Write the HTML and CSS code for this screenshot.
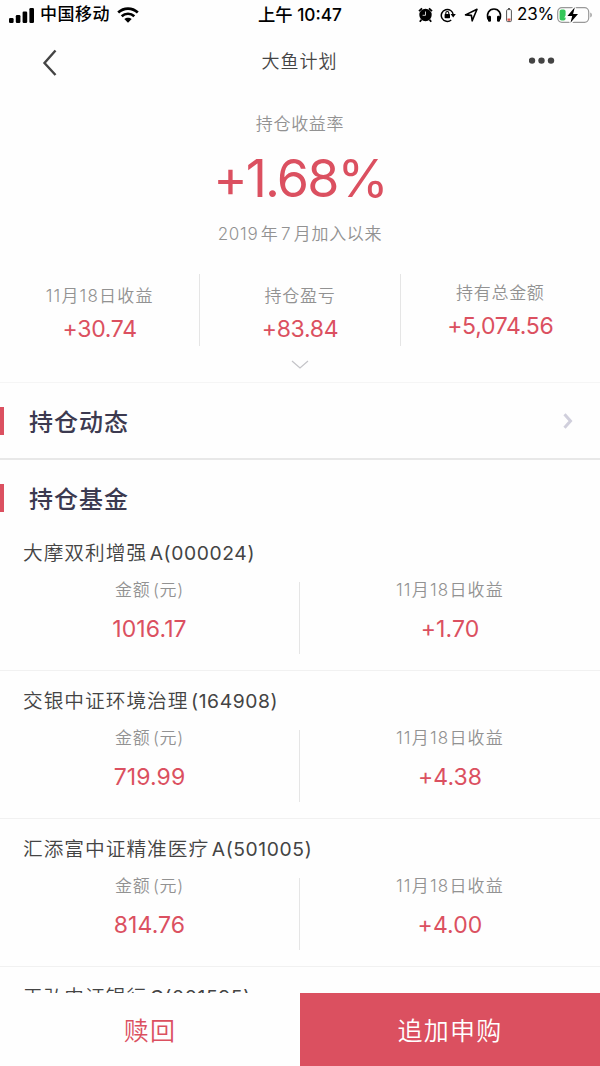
FILE: index.html
```html
<!DOCTYPE html>
<html lang="zh-CN">

<head>
    <title>大鱼计划</title>
    <meta charset="UTF-8">
    <link rel="stylesheet" href="styles.css">
</head>

<body>
    <div class="page">
        <div class="status-bar">
            <div class="status-left">
                <svg class="signal" width="26" height="16" viewBox="0 0 26 16">
                    <rect x="0" y="11" width="4.6" height="5" rx="1.2"/>
                    <rect x="6.8" y="8" width="4.6" height="8" rx="1.2"/>
                    <rect x="13.6" y="4.5" width="4.6" height="11.5" rx="1.2"/>
                    <rect x="20.4" y="1" width="4.6" height="15" rx="1.2"/>
                </svg>
                <span class="carrier">中国移动</span>
                <svg class="wifi" width="22" height="16" viewBox="0 0 22 16">
                    <path d="M1.2 5.6C6.8.4 15.2.4 20.8 5.6M4.7 9.2c3.6-3.3 9-3.3 12.6 0" fill="none" stroke="#000" stroke-width="2.7"/>
                    <path d="M7.3 12.1c2.1-1.9 5.3-1.9 7.4 0L11 15.8z"/>
                </svg>
            </div>
            <div class="clock">上午 10:47</div>
            <div class="status-right">
                <svg width="15" height="16" viewBox="0 0 15 16">
                    <circle cx="7.5" cy="8" r="6.2"/>
                    <path d="M1 4.2 4 1.4M14 4.2 11 1.4M3.4 12.8 1.8 14.8M11.6 12.8l1.6 2" stroke="#000" stroke-width="1.8"/>
                    <path d="M7.5 4.5v3.8H4.6" fill="none" stroke="#fff" stroke-width=".8"/>
                </svg>
                <svg class="lock" width="16" height="16" viewBox="0 0 16 16">
                    <path d="M11.2 13A6 6 0 1 1 13.3 8" fill="none" stroke="#000" stroke-width="1.5"/>
                    <path d="M10.6 7h5.2l-2.6 3.6z"/>
                    <rect x="4.6" y="7.1" width="5.4" height="4.1" rx=".6"/>
                    <path d="M5.8 7.3V6a1.5 1.5 0 0 1 3 0v1.3" fill="none" stroke="#000" stroke-width="1.1"/>
                </svg>
                <svg class="location" width="15" height="16" viewBox="0 0 15 16">
                    <path d="M1.5 7.9 13 2.3 8.2 13.8 7.4 8.4z" fill="none" stroke="#000" stroke-width="1.6" stroke-linejoin="round"/>
                </svg>
                <svg class="headphone" width="16" height="16" viewBox="0 0 16 16">
                    <path d="M2.1 12.5C.3 6.5 3 2 8 2s7.7 4.5 5.9 10.5" fill="none" stroke="#000" stroke-width="1.6"/>
                    <rect x="2" y="8.8" width="3" height="6" rx="1.2"/>
                    <rect x="11" y="8.8" width="3" height="6" rx="1.2"/>
                </svg>
                <svg class="mini-battery" width="6" height="16" viewBox="0 0 6 16">
                    <path d="M2 1h2v1.5H2z" fill="#555"/>
                    <rect x=".6" y="2.6" width="4.8" height="12" rx="1" fill="#fff" stroke="#555"/>
                    <rect x="1.5" y="11.5" width="3" height="2.3" fill="#e05a50"/>
                </svg>
                <span class="percent">23%</span>
                <svg class="battery" width="36" height="18" viewBox="0 0 36 18">
                    <rect x=".7" y="1.7" width="31" height="14.6" rx="4.2" fill="none" stroke="#999" stroke-width="1.2"/>
                    <path d="M33.3 6.5c2 .8 2 4.2 0 5z" fill="#999"/>
                    <rect x="2.6" y="3.6" width="6" height="10.8" rx="2" fill="#34c759"/>
                    <path d="M17.8 1.3 10.4 10h4.8l-1.7 6.7L21 8h-4.900z" stroke="#fff" stroke-width="3"/>
                    <path d="M17.8 1.3 10.4 10h4.8l-1.7 6.7L21 8h-4.900z"/>
                </svg>
            </div>
        </div>

        <div class="nav">
            <svg class="back" width="16" height="28" viewBox="0 0 16 28">
                <path d="M13.5 2.5 2.5 15l11 12" fill="none" stroke="#444" stroke-width="2.4"/>
            </svg>
            <h1 class="nav-title">大鱼计划</h1>
            <svg class="more" width="26" height="10" viewBox="0 0 26 10">
                <circle cx="3" cy="3.6" r="3.2"/>
                <circle cx="12.5" cy="3.6" r="3.2"/>
                <circle cx="22" cy="3.6" r="3.2"/>
            </svg>
        </div>

        <div class="summary">
            <div class="label">持仓收益率</div>
            <div class="rate">+1.68%</div>
            <div class="label since">2019 年 7 月加入以来</div>
            <div class="stats">
                <div class="stat">
                    <div class="label date">11月18日收益</div>
                    <div class="value">+30.74</div>
                </div>
                <div class="stat">
                    <div class="label">持仓盈亏</div>
                    <div class="value">+83.84</div>
                </div>
                <div class="stat stat-total">
                    <div class="label">持有总金额</div>
                    <div class="value">+5,074.56</div>
                </div>
            </div>
            <svg class="expand" width="18" height="10" viewBox="0 0 18 10">
                <path d="M1 1l8 7 8-7" fill="none" stroke="#c4c4c8" stroke-width="1.2"/>
            </svg>
        </div>

        <div class="section section-news">
            <h2>持仓动态</h2>
            <svg class="arrow" width="10" height="18" viewBox="0 0 10 18">
                <path d="M1.5 2.2 7.5 9l-6 6.8" fill="none" stroke="#d0cfdc" stroke-width="3"/>
            </svg>
        </div>

        <div class="section section-funds">
            <h2>持仓基金</h2>
        </div>

        <div class="funds">
            <div class="fund">
                <h3>大摩双利增强 <span class="code">A(000024)</span></h3>
                <div class="fund-data">
                    <div class="cell">
                        <div class="label">金额 (元)</div>
                        <div class="value">1016.17</div>
                    </div>
                    <div class="cell">
                        <div class="label date">11月18日收益</div>
                        <div class="value">+1.70</div>
                    </div>
                </div>
            </div>
            <div class="fund">
                <h3>交银中证环境治理 <span class="code">(164908)</span></h3>
                <div class="fund-data">
                    <div class="cell">
                        <div class="label">金额 (元)</div>
                        <div class="value">719.99</div>
                    </div>
                    <div class="cell">
                        <div class="label date">11月18日收益</div>
                        <div class="value">+4.38</div>
                    </div>
                </div>
            </div>
            <div class="fund">
                <h3>汇添富中证精准医疗 <span class="code">A(501005)</span></h3>
                <div class="fund-data">
                    <div class="cell">
                        <div class="label">金额 (元)</div>
                        <div class="value">814.76</div>
                    </div>
                    <div class="cell">
                        <div class="label date">11月18日收益</div>
                        <div class="value">+4.00</div>
                    </div>
                </div>
            </div>
            <div class="fund">
                <h3>天弘中证银行 <span class="code">C(001595)</span></h3>
            </div>
        </div>

        <div class="footer">
            <div class="btn btn-redeem">赎回</div>
            <div class="btn btn-buy">追加申购</div>
        </div>
    </div>
</body>

</html>
```
FILE: styles.css
```css
* {
    box-sizing: border-box;
}

body {
    margin: 0;
    background-color: #fefefe;
    font-family: Inter, "Noto Sans CJK SC", sans-serif;
    font-weight: 350;
    color: #444;
}

h1,
h2,
h3 {
    margin: 0;
    font-weight: 350;
}

svg {
    display: block;
    flex-shrink: 0;
}

.page {
    display: flex;
    flex-direction: column;
    width: 600px;
    height: 1066px;
    overflow: hidden;
}

.status-bar {
    display: grid;
    grid-template-columns: 1fr auto 1fr;
    align-items: center;
    height: 28px;
    padding: 0 7px 0 9px;
    font-size: 17px;
    line-height: 29px;
    font-weight: 500;
    color: #000;
}

.status-left,
.status-right {
    display: flex;
    align-items: center;
}

.status-right {
    justify-content: flex-end;
}

.carrier {
    margin: 0 7px 0 5px;
    letter-spacing: 0.5px;
}

.clock {
    padding-right: 2px;
    font-size: 17.3px;
}

.lock,
.headphone {
    margin-left: 7px;
}

.location {
    margin-left: 8px;
}

.mini-battery {
    margin-left: 4px;
}

.percent {
    margin: 0 3px 0 5px;
    font-weight: 400;
    letter-spacing: -0.2px;
}

.nav {
    display: flex;
    align-items: center;
    justify-content: space-between;
    height: 68px;
    padding: 0 45px 0 42px;
}

.nav-title {
    padding-left: 12px;
    font-size: 18px;
    line-height: 26px;
    letter-spacing: 1px;
}

.more {
    fill: #444;
}

.summary {
    display: flex;
    flex-direction: column;
    align-items: center;
    height: 287px;
    padding-top: 16px;
    border-bottom: 1px solid #f5f5f5;
}

.label {
    font-size: 17px;
    line-height: 24px;
    letter-spacing: 0.7px;
    word-spacing: -3px;
    color: #929292;
    white-space: nowrap;
}

.date {
    letter-spacing: 1.2px;
}

.rate {
    margin-top: 13px;
    font-size: 52px;
    font-weight: 400;
    line-height: 60px;
    letter-spacing: -1.9px;
    color: #db5060;
}

.since {
    margin-top: 13px;
}

.stats {
    display: flex;
    width: 100%;
    height: 72px;
    margin-top: 28px;
}

.stat {
    flex: 1;
    padding-top: 10px;
    text-align: center;
    border-right: 1px solid #e5e5e5;
}

.stat-total {
    padding-top: 7px;
    border-right: none;
}

.value {
    font-size: 23px;
    font-weight: 400;
    line-height: 30px;
    color: #db5060;
}

.stat .value {
    margin-top: 6px;
    letter-spacing: -0.3px;
}

.expand {
    margin-top: 14px;
}

.section {
    display: flex;
    align-items: center;
    justify-content: space-between;
    padding-right: 27px;
}

.section h2 {
    height: 28px;
    padding-left: 25px;
    border-left: 4px solid #db5060;
    font-size: 24px;
    line-height: 31px;
    font-weight: 500;
    letter-spacing: 1px;
    color: #3c3a50;
}

.section-news {
    height: 77px;
    border-bottom: 2px solid #e8e8e8;
}

.section-funds {
    height: 63px;
    padding-top: 13px;
}

.funds {
    flex: 1;
    min-height: 0;
    overflow: hidden;
}

.fund {
    height: 148px;
    padding-top: 16px;
    border-bottom: 1px solid #f1f1f1;
}

.fund h3 {
    padding-left: 23px;
    font-size: 19.7px;
    line-height: 28px;
    letter-spacing: 1px;
    word-spacing: -4px;
}

.fund h3 .code {
    font-size: 19.3px;
    font-weight: 400;
    letter-spacing: 0.6px;
}

.fund-data {
    display: flex;
    height: 72px;
    margin-top: 15px;
}

.cell {
    width: 300px;
    text-align: center;
}

.cell:first-child {
    border-right: 1px solid #e5e5e5;
}

.cell .label {
    margin-top: -4px;
}

.cell .value {
    margin-top: 12px;
    letter-spacing: 0.1px;
}

.footer {
    display: flex;
    flex-shrink: 0;
    height: 73px;
}

.btn {
    flex: 1;
    font-size: 25px;
    line-height: 76px;
    letter-spacing: 1.3px;
    text-align: center;
}

.btn-redeem {
    color: #db5060;
}

.btn-buy {
    background-color: #db5060;
    color: #fff;
}
```
